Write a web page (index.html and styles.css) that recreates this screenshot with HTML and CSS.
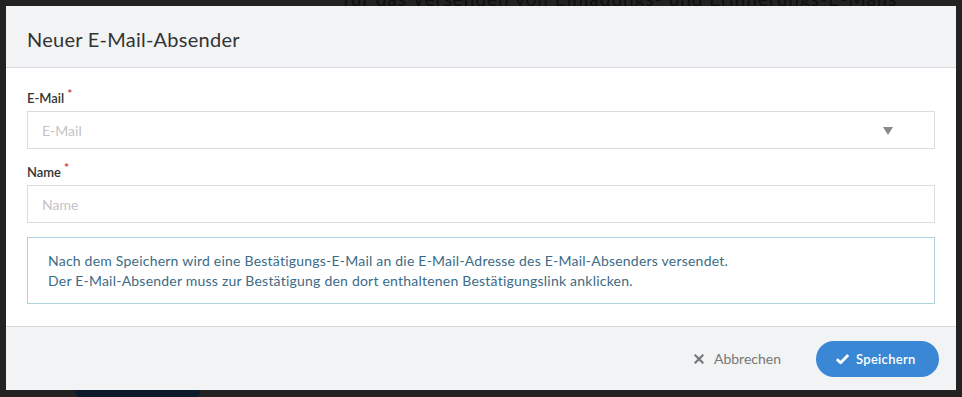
FILE: index.html
```html
<!DOCTYPE html>
<html lang="de">
<head>
    <meta charset="UTF-8">
    <meta name="viewport" content="width=device-width, initial-scale=1.0">
    <title>Neuer E-Mail-Absender</title>
    <link rel="stylesheet" href="styles.css">
</head>
<body>
    <div class="page">
        <p class="page-text">für das Versenden von Einladungs- und Erinnerungs-E-Mails</p>
        <div class="page-button"></div>
    </div>

    <div class="modal">
        <header class="modal-header">
            <h1>Neuer E-Mail-Absender</h1>
        </header>
        <form class="modal-body">
            <div class="form-group">
                <label for="email">E-Mail<span class="required">*</span></label>
                <div class="select" id="email">
                    <span class="placeholder">E-Mail</span>
                    <span class="caret"></span>
                </div>
            </div>
            <div class="form-group">
                <label for="name">Name<span class="required">*</span></label>
                <input type="text" id="name" placeholder="Name">
            </div>
            <div class="info">
                Nach dem Speichern wird eine Bestätigungs-E-Mail an die E-Mail-Adresse des E-Mail-Absenders versendet.<br>
                Der E-Mail-Absender muss zur Bestätigung den dort enthaltenen Bestätigungslink anklicken.
            </div>
        </form>
        <footer class="modal-footer">
            <button type="button" class="btn-cancel">
                <svg width="10" height="10" viewBox="0 0 10 10"><path d="M1.5 1.5 L8.5 8.5 M8.5 1.5 L1.5 8.5" stroke="#777" stroke-width="2.2" stroke-linecap="square"/></svg>
                Abbrechen
            </button>
            <button type="button" class="btn-save">
                <svg width="15" height="12" viewBox="0 0 15 12"><path d="M1.8 6.2 L5.6 9.8 L13.2 2" fill="none" stroke="#fff" stroke-width="2.8" stroke-linejoin="round"/></svg>
                Speichern
            </button>
        </footer>
    </div>
</body>
</html>
```

FILE: styles.css
```css
body {
    margin: 0;
    padding: 0;
    background-color: #222;
    font-family: Lato, "Open Sans", sans-serif;
    height: 397px;
    overflow: hidden;
}
.page {
    position: relative;
    height: 397px;
}
.page-text {
    margin: 0;
    position: absolute;
    top: -13px;
    left: 343px;
    font-size: 19px;
    letter-spacing: 1px;
    color: #0f0f0f;
}
.page-button {
    position: absolute;
    left: 75px;
    top: 384px;
    width: 125px;
    height: 14px;
    border-radius: 7px;
    background: #0c1b2b;
}
.modal {
    position: absolute;
    top: 6px;
    left: 6px;
    width: 950px;
    background: white;
}
.modal-header {
    background-color: #f2f3f5;
    border-bottom: 1px solid #d6d9dd;
    height: 61px;
    padding: 0 21px;
    display: flex;
    align-items: center;
}
.modal-header h1 {
    margin: 0;
    font-size: 20px;
    font-weight: normal;
    letter-spacing: 0.25px;
    color: #333;
    padding-top: 4px;
}
.modal-body {
    padding: 21px 21px 22px;
    border-bottom: 1px solid #d6d9dd;
}
.form-group {
    margin-bottom: 14px;
}
label {
    display: block;
    font-size: 13px;
    font-weight: 600;
    line-height: 18px;
    color: #333;
    margin-bottom: 4px;
}
.required {
    color: #c9302c;
    font-size: 12px;
    vertical-align: top;
    margin-left: 3px;
    position: relative;
    top: -4px;
}
input, .select {
    box-sizing: border-box;
    width: 100%;
    height: 38px;
    padding: 0 14px;
    border: 1px solid #dcdcdc;
    border-radius: 0;
    font-family: inherit;
    font-size: 14px;
    color: #333;
    margin: 0;
    outline: none;
}
input::placeholder, .placeholder {
    color: #c4c4c4;
}
.select {
    display: flex;
    align-items: center;
    justify-content: space-between;
}
.caret {
    width: 0;
    height: 0;
    border-left: 5px solid transparent;
    border-right: 5px solid transparent;
    border-top: 8px solid #888;
    margin-right: 27px;
    margin-top: 2px;
}
.info {
    border: 1px solid #aed3df;
    padding: 13px 20px 12px;
    font-size: 14px;
    line-height: 20px;
    letter-spacing: 0.22px;
    color: #3b6b86;
}
.modal-footer {
    background-color: #f2f3f5;
    height: 63px;
    padding: 0 17px 0 0;
    display: flex;
    align-items: center;
    justify-content: flex-end;
    gap: 35px;
}
button {
    font-family: inherit;
    cursor: pointer;
    display: flex;
    align-items: center;
}
.btn-cancel {
    background: none;
    border: none;
    padding: 0;
    font-size: 14px;
    color: #777;
    gap: 10px;
}
.btn-save {
    background-color: #3a87d6;
    color: white;
    border: none;
    border-radius: 18px;
    height: 36px;
    width: 123px;
    padding: 0 0 0 19px;
    font-size: 13px;
    font-weight: 600;
    letter-spacing: 0.3px;
    gap: 6px;
    margin-top: 1px;
}
.btn-save:hover {
    background-color: #2f74bd;
}
```
